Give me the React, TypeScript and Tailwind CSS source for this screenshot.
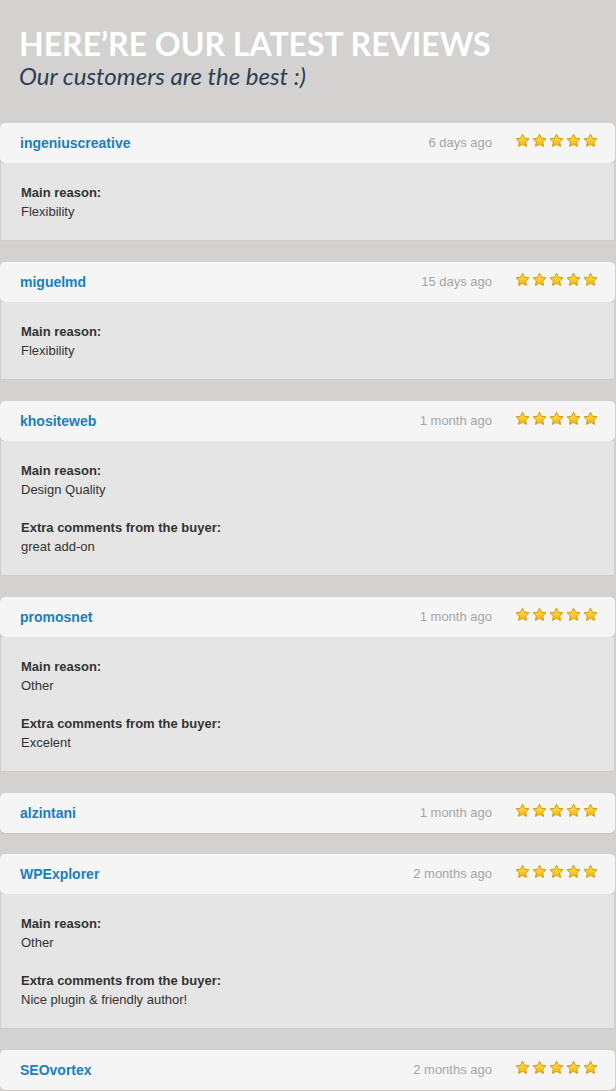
import React from "react";

interface Review {
  user: string;
  date: string;
  reason?: string;
  comment?: string;
}

const reviews: Review[] = [
  { user: "ingeniuscreative", date: "6 days ago", reason: "Flexibility" },
  { user: "miguelmd", date: "15 days ago", reason: "Flexibility" },
  { user: "khositeweb", date: "1 month ago", reason: "Design Quality", comment: "great add-on" },
  { user: "promosnet", date: "1 month ago", reason: "Other", comment: "Excelent" },
  { user: "alzintani", date: "1 month ago" },
  { user: "WPExplorer", date: "2 months ago", reason: "Other", comment: "Nice plugin & friendly author!" },
  { user: "SEOvortex", date: "2 months ago" },
];

const Star = () => (
  <svg width="15" height="15" viewBox="0 0 24 24">
    <defs>
      <linearGradient id="starFill" x1="0" y1="0" x2="0" y2="1">
        <stop offset="0%" stopColor="#ffe066" />
        <stop offset="100%" stopColor="#f9b700" />
      </linearGradient>
    </defs>
    <path
      d="M12 1.8l3.1 6.6 7.2.9-5.3 5 1.4 7.1L12 17.9l-6.4 3.5 1.4-7.1-5.3-5 7.2-.9z"
      fill="url(#starFill)"
      stroke="#d69a00"
      strokeWidth="1.6"
      strokeLinejoin="round"
    />
  </svg>
);

const ReviewCard = ({ review }: { review: Review }) => {
  return (
    <div className="flex flex-col">
      <div className="h-10 flex items-center pl-5 pr-[17px] bg-[#f5f5f5] rounded-[5px] shadow-[0_1px_1px_rgba(0,0,0,0.08)]">
        <p className="text-[14px] font-bold text-[#1a7fbd]">{review.user}</p>
        <p className="ml-auto text-[13px] text-[#a5a5a5]">{review.date}</p>
        <div className="flex items-center gap-[2px] ml-[23px] -mt-[5px]">
          <Star />
          <Star />
          <Star />
          <Star />
          <Star />
        </div>
      </div>
      {review.reason && (
        <div className="bg-[#e5e5e5] border-x border-b border-[#cdcdcd] px-5 pt-5 pb-[19px] text-[13px] leading-[19px] text-[#333]">
          <p className="font-bold">Main reason:</p>
          <p>{review.reason}</p>
          {review.comment && (
            <>
              <p className="font-bold mt-[19px]">Extra comments from the buyer:</p>
              <p>{review.comment}</p>
            </>
          )}
        </div>
      )}
    </div>
  );
};

export default function App() {
  return (
    <div className="min-h-screen bg-[#d3d2d0] font-['Liberation_Sans',Arial,sans-serif] overflow-hidden">
      <div className="px-[19px] pt-[26px] pb-[33px] font-['Lato',sans-serif]">
        <h1 className="text-[32px] leading-[36px] font-bold text-white">
          HERE’RE OUR LATEST REVIEWS
        </h1>
        <p className="text-[24px] leading-[28px] italic text-[#2c3e55]">
          Our customers are the best :)
        </p>
      </div>
      <div className="flex flex-col gap-[21px] pr-px">
        {reviews.map((r) => (
          <ReviewCard key={r.user} review={r} />
        ))}
      </div>
    </div>
  );
}
